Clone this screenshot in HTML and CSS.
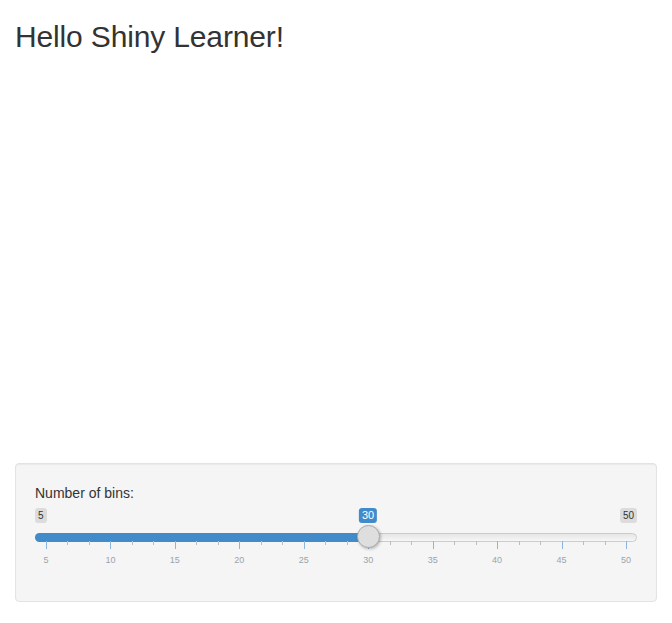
FILE: index.html
```html
<!DOCTYPE html>
<html>
<head>
<meta charset="utf-8">
<link rel="stylesheet" href="styles.css">
</head>
<body>
<div class="container">
  <h2 class="title">Hello Shiny Learner!</h2>
  <div class="plot"></div>
  <div class="well">
    <div class="form-group">
      <label class="control-label">Number of bins:</label>
      <div class="irs">
        <span class="irs-min">5</span>
        <span class="irs-max">50</span>
        <span class="irs-line"></span>
        <span class="irs-bar"></span>
        <div class="irs-grid">
          <span class="pol" style="left:0%"></span>
          <span class="pol small" style="left:3.7037%"></span>
          <span class="pol small" style="left:7.4074%"></span>
          <span class="pol" style="left:11.1111%"></span>
          <span class="pol small" style="left:14.8148%"></span>
          <span class="pol small" style="left:18.5185%"></span>
          <span class="pol" style="left:22.2222%"></span>
          <span class="pol small" style="left:25.9259%"></span>
          <span class="pol small" style="left:29.6296%"></span>
          <span class="pol" style="left:33.3333%"></span>
          <span class="pol small" style="left:37.0370%"></span>
          <span class="pol small" style="left:40.7407%"></span>
          <span class="pol" style="left:44.4444%"></span>
          <span class="pol small" style="left:48.1481%"></span>
          <span class="pol small" style="left:51.8519%"></span>
          <span class="pol" style="left:55.5556%"></span>
          <span class="pol small" style="left:59.2593%"></span>
          <span class="pol small" style="left:62.9630%"></span>
          <span class="pol" style="left:66.6667%"></span>
          <span class="pol small" style="left:70.3704%"></span>
          <span class="pol small" style="left:74.0741%"></span>
          <span class="pol" style="left:77.7778%"></span>
          <span class="pol small" style="left:81.4815%"></span>
          <span class="pol small" style="left:85.1852%"></span>
          <span class="pol" style="left:88.8889%"></span>
          <span class="pol small" style="left:92.5926%"></span>
          <span class="pol small" style="left:96.2963%"></span>
          <span class="pol" style="left:100%"></span>
          <span class="txt" style="left:0%">5</span>
          <span class="txt" style="left:11.1111%">10</span>
          <span class="txt" style="left:22.2222%">15</span>
          <span class="txt" style="left:33.3333%">20</span>
          <span class="txt" style="left:44.4444%">25</span>
          <span class="txt" style="left:55.5556%">30</span>
          <span class="txt" style="left:66.6667%">35</span>
          <span class="txt" style="left:77.7778%">40</span>
          <span class="txt" style="left:88.8889%">45</span>
          <span class="txt" style="left:100%">50</span>
        </div>
        <span class="irs-single">30</span>
        <span class="irs-handle"></span>
      </div>
    </div>
  </div>
</div>
</body>
</html>
```
FILE: styles.css
```css
* { box-sizing: border-box; }
html, body { margin: 0; padding: 0; background: #fff; }
body {
  font-family: "Liberation Sans", Arial, Helvetica, sans-serif;
  font-size: 14px;
  line-height: 1.42857;
  color: #333;
}
.container { padding: 0 15px; }
.title {
  margin: 20px 0 10px;
  font-size: 30px;
  line-height: 33px;
  font-weight: 500;
  letter-spacing: -0.15px;
  color: #333;
}
.plot { height: 400px; }
.well {
  background: #f5f5f5;
  border: 1px solid #e3e3e3;
  border-radius: 4px;
  box-shadow: inset 0 1px 1px rgba(0,0,0,.05);
  padding: 19px;
  margin-bottom: 20px;
}
.form-group { margin-bottom: 15px; }
.control-label {
  display: block;
  font-weight: normal;
  margin-bottom: 5px;
  line-height: 20px;
}
.irs {
  position: relative;
  height: 59px;
}
.irs-min, .irs-max, .irs-single {
  position: absolute;
  top: 0;
  font-size: 10px;
  line-height: 13px;
  padding: 1px 3px;
  border-radius: 3px;
  height: 15px;
}
.irs-min, .irs-max {
  background: rgba(0,0,0,0.1);
  color: #333;
}
.irs-min { left: 0; }
.irs-max { right: 0; }
.irs-single {
  left: 333px;
  transform: translateX(-50%);
  background: #428bca;
  color: #fff;
  font-size: 11px;
}
.irs-line {
  position: absolute;
  top: 25px;
  left: 0;
  right: 0;
  height: 9px;
  border: 1px solid #ccc;
  border-radius: 16px;
  background: linear-gradient(to bottom, #ddd -50%, #fff 150%);
}
.irs-bar {
  position: absolute;
  top: 25px;
  left: 0;
  width: 334px;
  height: 9px;
  background: #428bca;
  border-radius: 8px 0 0 8px;
}
.irs-handle {
  position: absolute;
  top: 17px;
  left: 322px;
  width: 23px;
  height: 23px;
  border: 1px solid #aaa;
  background: #dedede;
  border-radius: 50%;
  box-shadow: 1px 1px 3px rgba(0,0,0,0.25);
}
.irs-grid {
  position: absolute;
  top: 33px;
  left: 11px;
  width: 580px;
  height: 26px;
}
.pol {
  position: absolute;
  top: 0;
  width: 1px;
  height: 8px;
  background: #8db5dc;
}
.pol.small {
  height: 4px;
  background: #b9bec3;
}
.txt {
  position: absolute;
  top: 15px;
  transform: translateX(-50%);
  font-size: 9px;
  line-height: 9px;
  color: #99a4ac;
  white-space: nowrap;
}
```
